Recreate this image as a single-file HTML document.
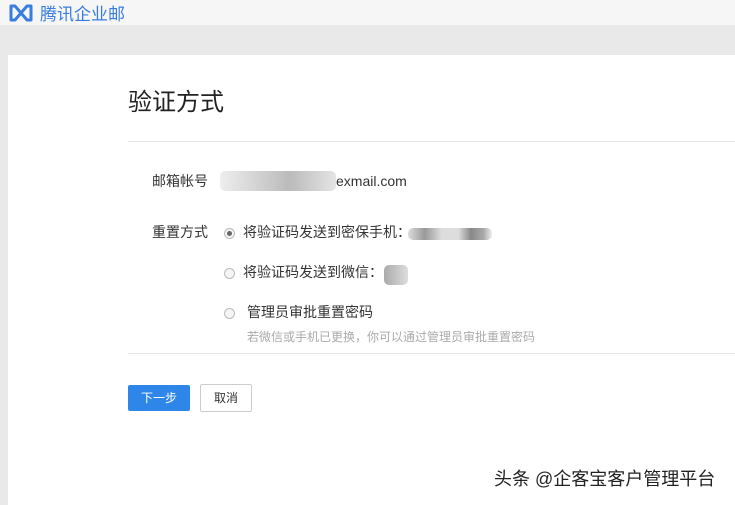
<!DOCTYPE html>
<html><head><meta charset="utf-8"><style>
*{margin:0;padding:0;box-sizing:border-box}
body{width:735px;height:505px;overflow:hidden;background:#e9e9e9;font-family:"Liberation Sans","Noto Sans CJK SC",sans-serif;position:relative;color:#333}
.top{position:absolute;left:0;top:0;width:735px;height:25px;background:#f6f6f6}
.logo{position:absolute;left:8px;top:0px;display:flex;align-items:center;color:#3a7de0;font-size:17px}
.card{position:absolute;left:8px;top:55px;right:0;bottom:0;background:#fff}
.a{position:absolute;white-space:nowrap;line-height:1.2}
.line{position:absolute;left:128px;right:0;height:1px;background:#e6e6e6}
.radio{position:absolute;width:11px;height:11px;border-radius:50%;border:1px solid #bbb;background:#f4f4f4}
.blur{position:absolute;background:#ddd;border-radius:5px}
</style></head><body>
<div class="top"><div class="logo"><svg width="26" height="20" viewBox="0 0 26 20"><path d="M3 3h4l6 7 6-7h4v14h-4l-6-7-6 7H3z" fill="none" stroke="#3a7de0" stroke-width="3" stroke-linejoin="round"/></svg><span style="margin-left:6px">腾讯企业邮</span></div></div>
<div class="card"></div>
<div class="a" style="left:128px;top:89px;font-size:24px;color:#222">验证方式</div>
<div class="line" style="top:141px"></div>
<div class="a" style="left:152px;top:173px;font-size:14px">邮箱帐号</div>
<div class="blur" style="left:220px;top:171px;width:116px;height:20px;background:linear-gradient(90deg,#eee,#ccc 40%,#bbb 60%,#e4e4e4)"></div>
<div class="a" style="left:336px;top:173px;font-size:14px">exmail.com</div>
<div class="a" style="left:152px;top:224px;font-size:14px">重置方式</div>
<div class="radio" style="left:224px;top:228px"><div style="width:5px;height:5px;border-radius:50%;background:#666;margin:2px"></div></div>
<div class="a" style="left:243px;top:224px;font-size:14px">将验证码发送到密保手机：</div>
<div class="blur" style="left:408px;top:228px;width:84px;height:12px;background:linear-gradient(90deg,#ddd,#999 20%,#ddd 40%,#ddd 60%,#888 75%,#aaa 90%,#eee)"></div>
<div class="radio" style="left:224px;top:268px"></div>
<div class="a" style="left:243px;top:264px;font-size:14px">将验证码发送到微信：</div>
<div class="blur" style="left:384px;top:265px;width:24px;height:20px;background:linear-gradient(90deg,#aaa,#ddd)"></div>
<div class="radio" style="left:224px;top:308px"></div>
<div class="a" style="left:247px;top:304px;font-size:14px">管理员审批重置密码</div>
<div class="a" style="left:247px;top:330px;font-size:12px;color:#aaa">若微信或手机已更换，你可以通过管理员审批重置密码</div>
<div class="line" style="top:353px"></div>
<div class="a" style="left:128px;top:385px;width:62px;height:26px;background:#2e86e8;border-radius:2px;color:#fff;font-size:12px;text-align:center;line-height:26px">下一步</div>
<div class="a" style="left:200px;top:384px;width:52px;height:28px;border:1px solid #ccc;border-radius:2px;font-size:12px;text-align:center;line-height:26px">取消</div>
<div class="a" style="left:494px;top:469px;font-size:18px;color:#222">头条 @企客宝客户管理平台</div>
</body></html>
